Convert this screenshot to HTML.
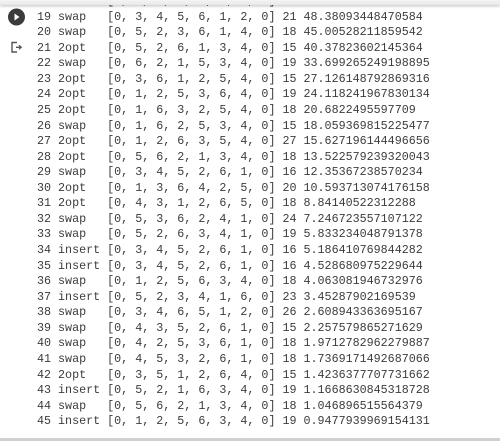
<!DOCTYPE html>
<html><head><style>
html,body{margin:0;padding:0;background:#fff;width:500px;height:441px;overflow:hidden;position:relative}
pre{position:absolute;left:37px;top:-6px;margin:0;font-family:"Liberation Mono",monospace;font-size:11.7px;line-height:15.57px;color:#3c3c3c}
.sh{position:absolute;left:0;top:0;width:500px;height:5px;background:linear-gradient(#f4f4f4,#e8e8e8);box-shadow:0 1px 3px rgba(0,0,0,.25)}
.bot{position:absolute;left:0;top:438px;width:500px;height:3px;background:#d0d0d0}
</style></head><body>
<pre>18 insert [0, 4, 5, 3, 6, 1, 2, 0] 20 57.4779872928647
19 swap   [0, 3, 4, 5, 6, 1, 2, 0] 21 48.38093448470584
20 swap   [0, 5, 2, 3, 6, 1, 4, 0] 18 45.00528211859542
21 2opt   [0, 5, 2, 6, 1, 3, 4, 0] 15 40.37823602145364
22 swap   [0, 6, 2, 1, 5, 3, 4, 0] 19 33.699265249198895
23 2opt   [0, 3, 6, 1, 2, 5, 4, 0] 15 27.126148792869316
24 2opt   [0, 1, 2, 5, 3, 6, 4, 0] 19 24.118241967830134
25 2opt   [0, 1, 6, 3, 2, 5, 4, 0] 18 20.6822495597709
26 swap   [0, 1, 6, 2, 5, 3, 4, 0] 15 18.059369815225477
27 2opt   [0, 1, 2, 6, 3, 5, 4, 0] 27 15.627196144496656
28 2opt   [0, 5, 6, 2, 1, 3, 4, 0] 18 13.522579239320043
29 swap   [0, 3, 4, 5, 2, 6, 1, 0] 16 12.35367238570234
30 2opt   [0, 1, 3, 6, 4, 2, 5, 0] 20 10.593713074176158
31 2opt   [0, 4, 3, 1, 2, 6, 5, 0] 18 8.84140522312288
32 swap   [0, 5, 3, 6, 2, 4, 1, 0] 24 7.246723557107122
33 swap   [0, 5, 2, 6, 3, 4, 1, 0] 19 5.833234048791378
34 insert [0, 3, 4, 5, 2, 6, 1, 0] 16 5.186410769844282
35 insert [0, 3, 4, 5, 2, 6, 1, 0] 16 4.528680975229644
36 swap   [0, 1, 2, 5, 6, 3, 4, 0] 18 4.063081946732976
37 insert [0, 5, 2, 3, 4, 1, 6, 0] 23 3.45287902169539
38 swap   [0, 3, 4, 6, 5, 1, 2, 0] 26 2.608943363695167
39 swap   [0, 4, 3, 5, 2, 6, 1, 0] 15 2.257579865271629
40 swap   [0, 4, 2, 5, 3, 6, 1, 0] 18 1.9712782962279887
41 swap   [0, 4, 5, 3, 2, 6, 1, 0] 18 1.7369171492687066
42 2opt   [0, 3, 5, 1, 2, 6, 4, 0] 15 1.4236377707731662
43 insert [0, 5, 2, 1, 6, 3, 4, 0] 19 1.1668630845318728
44 swap   [0, 5, 6, 2, 1, 3, 4, 0] 18 1.046896515564379
45 insert [0, 1, 2, 5, 6, 3, 4, 0] 19 0.9477939969154131</pre>
<div class="sh"></div>
<svg style="position:absolute;left:0;top:0" width="36" height="60">
<circle cx="16.5" cy="17" r="8.5" fill="#3b3b3b"/>
<path d="M14.5 13.5 L19.5 17 L14.5 20.5Z" fill="#fff"/>
<path d="M17 42.5 H12 V52 H17" fill="none" stroke="#555" stroke-width="1.4"/>
<path d="M16 47.3 H21 M19 45.3 L21.2 47.3 L19 49.3" fill="none" stroke="#555" stroke-width="1.3"/>
</svg>
<div class="bot"></div>
</body></html>
